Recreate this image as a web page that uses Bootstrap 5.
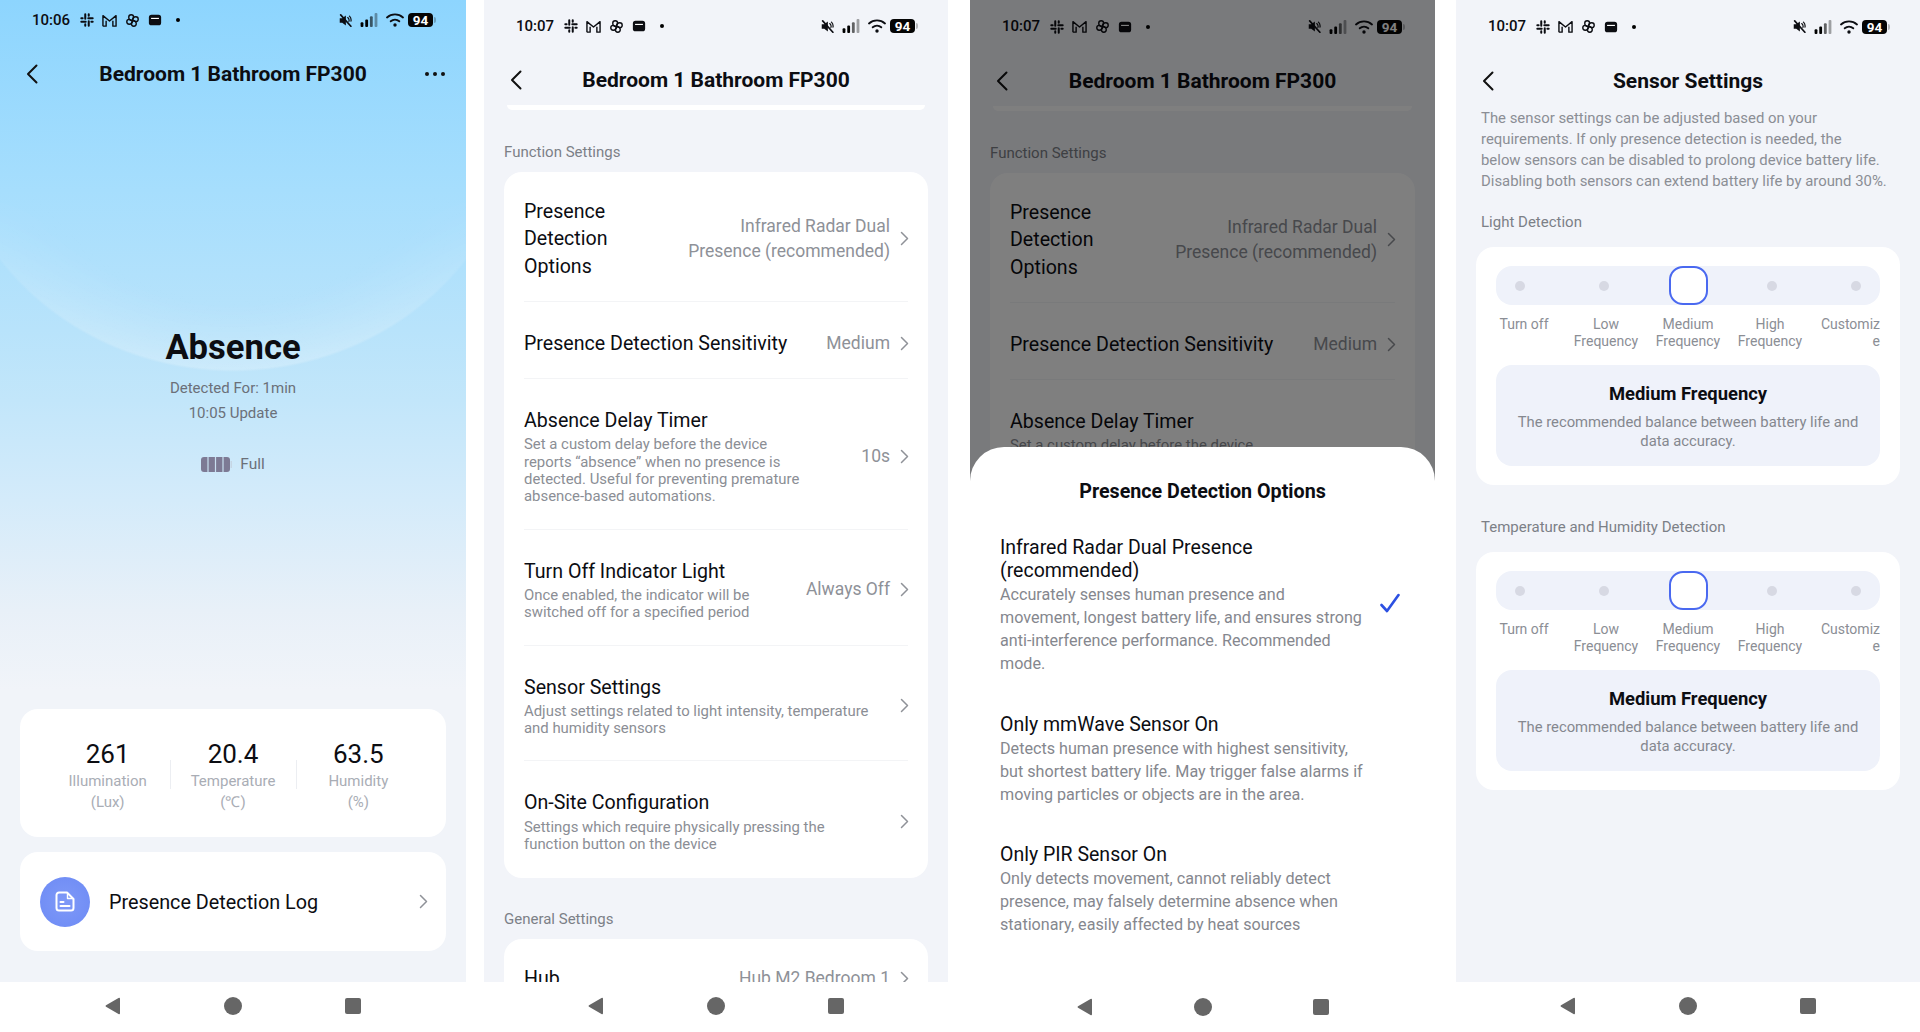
<!DOCTYPE html>
<html lang="en">
<head>
  <meta charset="UTF-8">
  <title>FP300 Settings Screens</title>
  <link href="https://cdn.jsdelivr.net/npm/bootstrap@5.3.0/dist/css/bootstrap.min.css" rel="stylesheet">
  <style>
    html, body { height: 100%; overflow: hidden; background: #fff; }
    body { font-family: Roboto, "Liberation Sans", sans-serif; color: #0c0d12; }
    .sprite { position: absolute; width: 0; height: 0; }

    .screens { width: 1920px; height: 1032px; }
    .phone { height: 1032px; flex: none; position: relative; }
    .phone-a { width: 466px; margin-right: 18px; }
    .phone-b { width: 464px; margin-right: 22px; }
    .phone-c { width: 465px; margin-right: 21px; }
    .phone-d { width: 464px; }
    .screen-area { height: 982px; overflow: hidden; background: #f2f4f9; position: relative; }
    .phone-a .screen-area {
      isolation: isolate;
      background: linear-gradient(#8dd5fe 0, #a6defd 190px, #b8e3fb 330px, #c2e6fa 400px, #d4ebfa 500px, #e8f0f8 610px, #f1f4f9 690px);
    }
    /* the pale dome behind the status word */
    .phone-a .screen-area::before {
      content: "";
      position: absolute;
      inset: 0;
      z-index: -1;
      background: radial-gradient(ellipse 290px 272px at 50% 100px, rgba(255,255,255,0) 74%, rgba(255,255,255,.24) 99%, rgba(255,255,255,0) 100%);
      -webkit-mask-image: linear-gradient(transparent 190px, #000 375px);
      mask-image: linear-gradient(transparent 190px, #000 375px);
    }

    .statusbar { padding: 2px 33px 0 32px; font-size: 15px; font-weight: 500; }
    .statusbar svg { display: block; flex: none; }
    .sb-a { height: 38px; }
    .sb-b { height: 50px; }
    .sb-c { height: 51px; }
    .sb-gap { margin-left: 8px; }
    .sb-gap-first { margin-left: 10px; }
    .sb-point { width: 4px; height: 4px; margin-left: 14px; }
    .batt-num { width: 25px; height: 14px; background: #050505; color: #fff; border-radius: 4px; font-size: 13.5px; line-height: 14px; font-weight: 700; text-align: center; position: relative; }
    .batt-num::after { content: ""; position: absolute; right: -3px; top: 4px; width: 2px; height: 6px; border-radius: 0 2px 2px 0; background: rgba(0,0,0,.25); }

    .topbar { display: grid; grid-template-columns: 1fr auto 1fr; align-items: center; padding: 4px 26px 0; height: 55px; }
    .sb-a + .topbar { height: 70px; padding-top: 2px; }
    .top-title { font-size: 21px; font-weight: 700; line-height: 28px; white-space: nowrap; }
    .back-icon { width: 12px; height: 20px; fill: none; stroke: #111; stroke-width: 2; stroke-linecap: round; stroke-linejoin: round; display: block; }
    .more-dots { justify-self: end; width: 20px; height: 4px; fill: #111; display: block; margin-right: -5px; }

    .state-word { font-size: 34.6px; line-height: 40px; font-weight: 700; margin-top: 219px; }
    .state-sub { font-size: 15px; line-height: 25px; color: #6b7079; margin-top: 9px; }
    .state-batt { font-size: 15.5px; line-height: 20px; color: #6b7079; margin-top: 28px; }
    .soft-card { background: #fff; border-radius: 18px; }
    .reading-card { margin: 0 20px; height: 128px; padding: 30px 25px 0; }
    .reading { flex: 1 1 0; text-align: center; position: relative; }
    .reading + .reading::before { content: ""; position: absolute; left: 0; top: 21px; height: 29px; width: 1px; background: #eceef2; }
    .reading-num { font-size: 26px; line-height: 30px; }
    .reading-lab { font-size: 15px; line-height: 21px; color: #a9adb5; margin-top: 2px; }
    .log-card { margin: 15px 20px 31px; height: 99px; padding: 0 19px 0 20px; }
    .log-icon { width: 50px; height: 50px; border-radius: 50%; background: radial-gradient(circle, #7f99f7 0, #6c8af5 100%); flex: none; }
    .log-text { font-size: 19.8px; margin-left: 19px; padding-top: 2px; }
    .chev { width: 9px; height: 15px; fill: none; stroke: #8f9298; stroke-width: 1.5; stroke-linecap: round; stroke-linejoin: round; display: block; flex: none; margin-right: -1px; }

    .scroll-sliver { height: 5px; margin: 0 23px; background: #fff; border-radius: 0 0 12px 12px; }
    .sec-label { font-size: 15px; line-height: 20px; color: #7c8087; }
    .set-block { margin: 32px 20px 0; }
    .set-block + .set-block { margin-top: 31px; }
    .set-card { margin-top: 10px; padding: 0 20px 2px; }
    .set-row { padding: 28px 0 23px; border-bottom: 1px solid #f3f4f6; }
    .set-row:last-child { border-bottom: 0; }
    .row-one { padding: 26px 0 21px; }
    .row-two { padding-bottom: 21px; }
    .row-hub { padding-top: 26px; }
    .row-title { font-size: 19.6px; line-height: 27.3px; }
    .row-desc { font-size: 14.9px; line-height: 17.3px; color: #8b8e95; margin-top: 2px; }
    .row-val { font-size: 17.5px; line-height: 25px; color: #8e9198; text-align: right; margin-right: 10px; }

    .dim-layer { position: absolute; inset: 0; background: rgba(0,0,0,.5); }
    .sheet { position: absolute; left: 0; right: 0; top: 447px; bottom: 0; background: #fff; border-radius: 34px 34px 0 0; padding: 33px 30px 0; }
    .sheet-title { font-size: 19.7px; line-height: 24px; font-weight: 700; text-align: center; margin-bottom: 32px; }
    .opt-item { margin-bottom: 37.5px; }
    .opt-text { width: 366px; flex: none; }
    .opt-name { font-size: 19.5px; line-height: 23px; }
    .opt-desc { font-size: 16.15px; line-height: 23px; color: #85878e; margin-top: 1px; }
    .tick { width: 20px; height: 20px; margin: 0 0 5px 14px; fill: none; stroke: #2c50e2; stroke-width: 2.6; stroke-linecap: round; stroke-linejoin: round; flex: none; }

    .intro { font-size: 14.9px; line-height: 21px; color: #8b8e95; padding: 0 25px; margin: 2px 0 0; }
    .freq-block { margin: 20px 20px 0; }
    .freq-block + .freq-block { margin-top: 32px; }
    .freq-label { padding-left: 5px; }
    .freq-card { margin-top: 15px; height: 238px; padding: 19px 20px; }
    .freq-track { height: 39px; background: #eff2fa; border-radius: 16px; }
    .freq-cell { width: 48px; }
    .freq-dot { width: 10px; height: 10px; border-radius: 50%; background: #d7d9e3; }
    .freq-sel { width: 39px; height: 39px; background: #fff; border: 2px solid #4a69f0; border-radius: 14px; }
    .freq-names { margin-top: 11px; font-size: 14px; line-height: 17.3px; color: #8b8e95; }
    .freq-name { width: 56px; white-space: nowrap; }
    .freq-box { margin-top: 14px; height: 101px; background: #eff2fa; border-radius: 16px; padding: 17px 15px 0; text-align: center; }
    .freq-head { font-size: 18.4px; line-height: 24px; font-weight: 700; }
    .freq-note { font-size: 14.8px; line-height: 19.5px; color: #85888f; margin-top: 7px; }

    .navbar-soft { height: 50px; background: #fff; gap: 102px; padding-bottom: 2px; position: relative; }
    .navbar-soft svg { width: 18px; height: 18px; fill: #666; display: block; }
    .phone-a .navbar-soft { padding-bottom: 3px; }
    .phone-c .navbar-soft { padding-top: 2px; gap: 100px; }
  </style>
</head>
<body>
  <svg class="sprite" aria-hidden="true">
    <symbol id="i-slack" viewBox="0 0 16 16"><path d="M6 1.5v5M1.5 6H3M9.5 6h5M10 1.5V3M1.5 10h5M6 13v1.5M10 9.5v5M13 10h1.5" fill="none" stroke="currentColor" stroke-width="2.3" stroke-linecap="round"/></symbol>
    <symbol id="i-m" viewBox="0 0 16 16"><path d="M1 14V2.800L8 8.600l7-5.800V14h-3.400V8.300M1 14h3.400V8.300" fill="none" stroke="currentColor" stroke-width="1.500" stroke-linejoin="round"/></symbol>
    <symbol id="i-fan" viewBox="0 0 16 16"><g fill="none" stroke="currentColor" stroke-width="1.500"><path d="M8 8C6 8 4 7 4 4.500a2.600 2.600 0 0 1 5.200 0C9.200 6 8 7 8 8z"/><path d="M8 8c0-2 1-4 3.500-4a2.600 2.600 0 0 1 0 5.200C10 9.200 9 8 8 8z"/><path d="M8 8c2 0 4 1 4 3.500a2.600 2.600 0 0 1-5.200 0C6.800 10 8 9 8 8z"/><path d="M8 8c0 2-1 4-3.500 4a2.600 2.600 0 0 1 0-5.200C6 6.800 7 8 8 8z"/></g></symbol>
    <symbol id="i-tray" viewBox="0 0 16 16"><rect x="1" y="2" width="14" height="12" rx="3" fill="currentColor"/><path d="M3.500 6.200h9" stroke="#fff" stroke-width="1.300"/></symbol>
    <symbol id="i-mute" viewBox="0 0 14 14"><path d="M.8 4.600h2.700L7.400 1.500v11L3.500 9.400H.8z" fill="currentColor"/><path d="M9.400 3.800a4 4 0 0 1 1.300 4.200M11.300 2.300a6 6 0 0 1 1.600 5.400" fill="none" stroke="currentColor" stroke-width="1.300" stroke-linecap="round"/><path d="M1.800 1 12.800 13.200" stroke="currentColor" stroke-width="1.800" stroke-linecap="round"/></symbol>
    <symbol id="i-signal" viewBox="0 0 18 15"><rect x="0" y="10" width="3" height="5" rx="1"/><rect x="5" y="7" width="3" height="8" rx="1"/><rect x="10" y="3.500" width="3" height="11.500" rx="1" opacity=".6"/><rect x="15" y="0" width="3" height="15" rx="1" opacity=".35"/></symbol>
    <symbol id="i-wifi" viewBox="0 0 18 14"><path d="M1 4.500a12 12 0 0 1 16 0M4.700 8.300a6.600 6.600 0 0 1 8.600 0" fill="none" stroke="currentColor" stroke-width="1.800" stroke-linecap="round"/><circle cx="9" cy="12" r="1.700" fill="currentColor"/></symbol>
    <symbol id="i-chev" viewBox="0 0 9 15"><path d="M1.500 1.500 7.500 7.500 1.500 13.500"/></symbol>
    <symbol id="i-back" viewBox="0 0 12 20"><path d="M10.500 1.500 2 10l8.500 8.500"/></symbol>
    <symbol id="i-tri" viewBox="0 0 18 18"><path d="M16 1.800v14.400a1 1 0 0 1-1.500.8L2 9.800a1 1 0 0 1 0-1.600L14.500 1a1 1 0 0 1 1.500.8z"/></symbol>
    <symbol id="i-dot" viewBox="0 0 18 18"><circle cx="9" cy="9" r="9"/></symbol>
    <symbol id="i-sq" viewBox="0 0 18 18"><rect x="1" y="1" width="16" height="16" rx="2"/></symbol>
  </svg>

  <div class="screens d-flex">

    <!-- screen 1: device status -->
    <section class="phone phone-a">
      <div class="screen-area d-flex flex-column">
        <div class="statusbar sb-a d-flex align-items-center">
          <span>10:06</span>
          <svg class="sb-gap-first" width="14" height="14"><use href="#i-slack"/></svg>
          <svg class="sb-gap" width="15" height="15"><use href="#i-m"/></svg>
          <svg class="sb-gap" width="15" height="15"><use href="#i-fan"/></svg>
          <svg class="sb-gap" width="14" height="14"><use href="#i-tray"/></svg>
          <span class="sb-point rounded-circle bg-black"></span>
          <svg class="ms-auto" width="13" height="13"><use href="#i-mute"/></svg>
          <svg class="ms-2" width="18" height="14"><use href="#i-signal"/></svg>
          <svg class="ms-2" width="18" height="14"><use href="#i-wifi"/></svg>
          <div class="batt-num ms-1">94</div>
        </div>
        <div class="topbar">
          <svg class="back-icon"><use href="#i-back"/></svg>
          <div class="top-title">Bedroom 1 Bathroom FP300</div>
          <svg class="more-dots" viewBox="0 0 20 4"><circle cx="2" cy="2" r="2"/><circle cx="10" cy="2" r="2"/><circle cx="18" cy="2" r="2"/></svg>
        </div>
        <div class="text-center">
          <div class="state-word">Absence</div>
          <div class="state-sub">Detected For: 1min<br>10:05 Update</div>
          <div class="state-batt d-flex justify-content-center align-items-center gap-2">
            <svg width="31" height="15" viewBox="0 0 31 15"><rect width="29" height="15" rx="3" fill="#7d7a94"/><path d="M7 0v15M14.500 0v15M22 0v15" stroke="#c9dff0" stroke-width="1.200"/><rect x="29.500" y="4" width="1.500" height="7" fill="#c6d6e4"/></svg>
            <span>Full</span>
          </div>
        </div>
        <div class="mt-auto">
          <div class="soft-card reading-card d-flex">
            <div class="reading"><div class="reading-num">261</div><div class="reading-lab">Illumination<br>(Lux)</div></div>
            <div class="reading"><div class="reading-num">20.4</div><div class="reading-lab">Temperature<br>(℃)</div></div>
            <div class="reading"><div class="reading-num">63.5</div><div class="reading-lab">Humidity<br>(%)</div></div>
          </div>
          <div class="soft-card log-card d-flex align-items-center">
            <div class="log-icon d-flex align-items-center justify-content-center">
              <svg width="20" height="21" viewBox="0 0 20 21" fill="none" stroke="#fff" stroke-width="2" stroke-linejoin="round" stroke-linecap="round"><path d="M12 1.500H4A2.500 2.500 0 0 0 1.500 4v13A2.500 2.500 0 0 0 4 19.500h12a2.500 2.500 0 0 0 2.500-2.500V8z"/><path d="M12.500 2v5.500H18" stroke-width="1.400"/><path d="M5.500 11h3M5.500 15h9"/></svg>
            </div>
            <div class="log-text flex-grow-1">Presence Detection Log</div>
            <svg class="chev"><use href="#i-chev"/></svg>
          </div>
        </div>
      </div>
      <div class="navbar-soft d-flex justify-content-center align-items-center">
        <svg><use href="#i-tri"/></svg><svg><use href="#i-dot"/></svg><svg><use href="#i-sq"/></svg>
      </div>
    </section>

    <!-- screen 2: settings list -->
    <section class="phone phone-b">
      <div class="screen-area">
        <div class="statusbar sb-b d-flex align-items-center">
          <span>10:07</span>
          <svg class="sb-gap-first" width="14" height="14"><use href="#i-slack"/></svg>
          <svg class="sb-gap" width="15" height="15"><use href="#i-m"/></svg>
          <svg class="sb-gap" width="15" height="15"><use href="#i-fan"/></svg>
          <svg class="sb-gap" width="14" height="14"><use href="#i-tray"/></svg>
          <span class="sb-point rounded-circle bg-black"></span>
          <svg class="ms-auto" width="13" height="13"><use href="#i-mute"/></svg>
          <svg class="ms-2" width="18" height="14"><use href="#i-signal"/></svg>
          <svg class="ms-2" width="18" height="14"><use href="#i-wifi"/></svg>
          <div class="batt-num ms-1">94</div>
        </div>
        <div class="topbar">
          <svg class="back-icon"><use href="#i-back"/></svg>
          <div class="top-title">Bedroom 1 Bathroom FP300</div>
          <span></span>
        </div>
        <div class="scroll-sliver"></div>
        <div class="set-block">
          <div class="sec-label">Function Settings</div>
          <div class="soft-card set-card">
            <div class="set-row row-one d-flex">
              <div class="row-title flex-grow-1" style="max-width:130px">Presence Detection Options</div>
              <div class="d-flex align-items-center ms-auto">
                <div class="row-val">Infrared Radar Dual<br>Presence (recommended)</div>
                <svg class="chev"><use href="#i-chev"/></svg>
              </div>
            </div>
            <div class="set-row row-two d-flex align-items-center">
              <div class="row-title flex-grow-1">Presence Detection Sensitivity</div>
              <div class="row-val">Medium</div>
              <svg class="chev"><use href="#i-chev"/></svg>
            </div>
            <div class="set-row d-flex">
              <div class="flex-grow-1">
                <div class="row-title">Absence Delay Timer</div>
                <div class="row-desc">Set a custom delay before the device<br>reports “absence” when no presence is<br>detected. Useful for preventing premature<br>absence-based automations.</div>
              </div>
              <div class="d-flex align-items-center">
                <div class="row-val">10s</div>
                <svg class="chev"><use href="#i-chev"/></svg>
              </div>
            </div>
            <div class="set-row d-flex">
              <div class="flex-grow-1">
                <div class="row-title">Turn Off Indicator Light</div>
                <div class="row-desc">Once enabled, the indicator will be<br>switched off for a specified period</div>
              </div>
              <div class="d-flex align-items-center">
                <div class="row-val">Always Off</div>
                <svg class="chev"><use href="#i-chev"/></svg>
              </div>
            </div>
            <div class="set-row d-flex">
              <div class="flex-grow-1">
                <div class="row-title">Sensor Settings</div>
                <div class="row-desc">Adjust settings related to light intensity, temperature<br>and humidity sensors</div>
              </div>
              <div class="d-flex align-items-center"><svg class="chev"><use href="#i-chev"/></svg></div>
            </div>
            <div class="set-row d-flex">
              <div class="flex-grow-1">
                <div class="row-title">On-Site Configuration</div>
                <div class="row-desc">Settings which require physically pressing the<br>function button on the device</div>
              </div>
              <div class="d-flex align-items-center"><svg class="chev"><use href="#i-chev"/></svg></div>
            </div>
          </div>
        </div>
        <div class="set-block">
          <div class="sec-label">General Settings</div>
          <div class="soft-card set-card">
            <div class="set-row row-hub d-flex align-items-center">
              <div class="row-title flex-grow-1">Hub</div>
              <div class="row-val">Hub M2 Bedroom 1</div>
              <svg class="chev"><use href="#i-chev"/></svg>
            </div>
          </div>
        </div>
      </div>
      <div class="navbar-soft d-flex justify-content-center align-items-center">
        <svg><use href="#i-tri"/></svg><svg><use href="#i-dot"/></svg><svg><use href="#i-sq"/></svg>
      </div>
    </section>

    <!-- screen 3: options sheet over the dimmed list -->
    <section class="phone phone-c">
      <div class="screen-area">
        <div class="statusbar sb-c d-flex align-items-center">
          <span>10:07</span>
          <svg class="sb-gap-first" width="14" height="14"><use href="#i-slack"/></svg>
          <svg class="sb-gap" width="15" height="15"><use href="#i-m"/></svg>
          <svg class="sb-gap" width="15" height="15"><use href="#i-fan"/></svg>
          <svg class="sb-gap" width="14" height="14"><use href="#i-tray"/></svg>
          <span class="sb-point rounded-circle bg-black"></span>
          <svg class="ms-auto" width="13" height="13"><use href="#i-mute"/></svg>
          <svg class="ms-2" width="18" height="14"><use href="#i-signal"/></svg>
          <svg class="ms-2" width="18" height="14"><use href="#i-wifi"/></svg>
          <div class="batt-num ms-1">94</div>
        </div>
        <div class="topbar">
          <svg class="back-icon"><use href="#i-back"/></svg>
          <div class="top-title">Bedroom 1 Bathroom FP300</div>
          <span></span>
        </div>
        <div class="scroll-sliver"></div>
        <div class="set-block">
          <div class="sec-label">Function Settings</div>
          <div class="soft-card set-card">
            <div class="set-row row-one d-flex">
              <div class="row-title flex-grow-1" style="max-width:130px">Presence Detection Options</div>
              <div class="d-flex align-items-center ms-auto">
                <div class="row-val">Infrared Radar Dual<br>Presence (recommended)</div>
                <svg class="chev"><use href="#i-chev"/></svg>
              </div>
            </div>
            <div class="set-row row-two d-flex align-items-center">
              <div class="row-title flex-grow-1">Presence Detection Sensitivity</div>
              <div class="row-val">Medium</div>
              <svg class="chev"><use href="#i-chev"/></svg>
            </div>
            <div class="set-row d-flex">
              <div class="flex-grow-1">
                <div class="row-title">Absence Delay Timer</div>
                <div class="row-desc">Set a custom delay before the device</div>
              </div>
            </div>
          </div>
        </div>
        <div class="dim-layer"></div>
        <div class="sheet">
          <div class="sheet-title">Presence Detection Options</div>
          <div class="opt-item d-flex align-items-center">
            <div class="opt-text">
              <div class="opt-name">Infrared Radar Dual Presence (recommended)</div>
              <div class="opt-desc">Accurately senses human presence and movement, longest battery life, and ensures strong anti-interference performance. Recommended mode.</div>
            </div>
            <svg class="tick" viewBox="0 0 20 20"><path d="M1.500 12l5.500 6L18.500 2"/></svg>
          </div>
          <div class="opt-item">
            <div class="opt-text">
              <div class="opt-name">Only mmWave Sensor On</div>
              <div class="opt-desc">Detects human presence with highest sensitivity, but shortest battery life. May trigger false alarms if moving particles or objects are in the area.</div>
            </div>
          </div>
          <div class="opt-item">
            <div class="opt-text">
              <div class="opt-name">Only PIR Sensor On</div>
              <div class="opt-desc">Only detects movement, cannot reliably detect presence, may falsely determine absence when stationary, easily affected by heat sources</div>
            </div>
          </div>
        </div>
      </div>
      <div class="navbar-soft d-flex justify-content-center align-items-center">
        <svg><use href="#i-tri"/></svg><svg><use href="#i-dot"/></svg><svg><use href="#i-sq"/></svg>
      </div>
    </section>

    <!-- screen 4: sensor settings -->
    <section class="phone phone-d">
      <div class="screen-area">
        <div class="statusbar sb-c d-flex align-items-center">
          <span>10:07</span>
          <svg class="sb-gap-first" width="14" height="14"><use href="#i-slack"/></svg>
          <svg class="sb-gap" width="15" height="15"><use href="#i-m"/></svg>
          <svg class="sb-gap" width="15" height="15"><use href="#i-fan"/></svg>
          <svg class="sb-gap" width="14" height="14"><use href="#i-tray"/></svg>
          <span class="sb-point rounded-circle bg-black"></span>
          <svg class="ms-auto" width="13" height="13"><use href="#i-mute"/></svg>
          <svg class="ms-2" width="18" height="14"><use href="#i-signal"/></svg>
          <svg class="ms-2" width="18" height="14"><use href="#i-wifi"/></svg>
          <div class="batt-num ms-1">94</div>
        </div>
        <div class="topbar">
          <svg class="back-icon"><use href="#i-back"/></svg>
          <div class="top-title">Sensor Settings</div>
          <span></span>
        </div>
        <p class="intro">The sensor settings can be adjusted based on your<br>requirements. If only presence detection is needed, the<br>below sensors can be disabled to prolong device battery life.<br>Disabling both sensors can extend battery life by around 30%.</p>

        <div class="freq-block">
          <div class="sec-label freq-label">Light Detection</div>
          <div class="soft-card freq-card">
            <div class="freq-track d-flex justify-content-between">
              <div class="freq-cell d-flex align-items-center justify-content-center"><span class="freq-dot"></span></div>
              <div class="freq-cell d-flex align-items-center justify-content-center"><span class="freq-dot"></span></div>
              <div class="freq-cell d-flex align-items-center justify-content-center"><span class="freq-sel"></span></div>
              <div class="freq-cell d-flex align-items-center justify-content-center"><span class="freq-dot"></span></div>
              <div class="freq-cell d-flex align-items-center justify-content-center"><span class="freq-dot"></span></div>
            </div>
            <div class="freq-names d-flex justify-content-between">
              <div class="freq-name d-flex flex-column align-items-center"><span>Turn off</span></div>
              <div class="freq-name d-flex flex-column align-items-center"><span>Low</span><span>Frequency</span></div>
              <div class="freq-name d-flex flex-column align-items-center"><span>Medium</span><span>Frequency</span></div>
              <div class="freq-name d-flex flex-column align-items-center"><span>High</span><span>Frequency</span></div>
              <div class="freq-name d-flex flex-column align-items-end"><span>Customiz</span><span>e</span></div>
            </div>
            <div class="freq-box">
              <div class="freq-head">Medium Frequency</div>
              <div class="freq-note">The recommended balance between battery life and data accuracy.</div>
            </div>
          </div>
        </div>

        <div class="freq-block">
          <div class="sec-label freq-label">Temperature and Humidity Detection</div>
          <div class="soft-card freq-card">
            <div class="freq-track d-flex justify-content-between">
              <div class="freq-cell d-flex align-items-center justify-content-center"><span class="freq-dot"></span></div>
              <div class="freq-cell d-flex align-items-center justify-content-center"><span class="freq-dot"></span></div>
              <div class="freq-cell d-flex align-items-center justify-content-center"><span class="freq-sel"></span></div>
              <div class="freq-cell d-flex align-items-center justify-content-center"><span class="freq-dot"></span></div>
              <div class="freq-cell d-flex align-items-center justify-content-center"><span class="freq-dot"></span></div>
            </div>
            <div class="freq-names d-flex justify-content-between">
              <div class="freq-name d-flex flex-column align-items-center"><span>Turn off</span></div>
              <div class="freq-name d-flex flex-column align-items-center"><span>Low</span><span>Frequency</span></div>
              <div class="freq-name d-flex flex-column align-items-center"><span>Medium</span><span>Frequency</span></div>
              <div class="freq-name d-flex flex-column align-items-center"><span>High</span><span>Frequency</span></div>
              <div class="freq-name d-flex flex-column align-items-end"><span>Customiz</span><span>e</span></div>
            </div>
            <div class="freq-box">
              <div class="freq-head">Medium Frequency</div>
              <div class="freq-note">The recommended balance between battery life and data accuracy.</div>
            </div>
          </div>
        </div>
      </div>
      <div class="navbar-soft d-flex justify-content-center align-items-center">
        <svg><use href="#i-tri"/></svg><svg><use href="#i-dot"/></svg><svg><use href="#i-sq"/></svg>
      </div>
    </section>

  </div>
  <script src="https://cdn.jsdelivr.net/npm/bootstrap@5.3.0/dist/js/bootstrap.bundle.min.js"></script>
</body>
</html>
